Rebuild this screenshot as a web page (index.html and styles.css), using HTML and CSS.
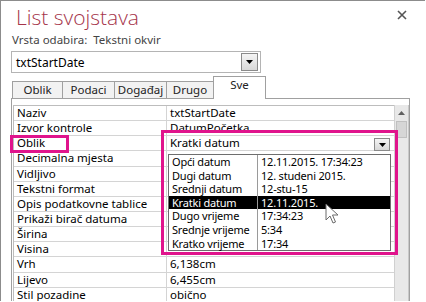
FILE: index.html
```html
<!DOCTYPE html>
<html lang="hr">

<head>
    <meta charset="UTF-8">
    <meta name="viewport" content="width=device-width, initial-scale=1.0">
    <title>List svojstava</title>
    <link rel="stylesheet" href="styles.css">
</head>

<body>
    <div class="window">
        <div class="head">
            <h1 class="title">List svojstava</h1>
            <span class="close">
                <svg width="10" height="10" viewBox="0 0 10 10">
                    <path d="M1 1 L9 9 M9 1 L1 9" stroke="#555" stroke-width="1.6" fill="none" />
                </svg>
            </span>
        </div>
        <div class="subtitle">Vrsta odabira:&nbsp; Tekstni okvir</div>

        <div class="picker">
            <span class="picker-text">txtStartDate</span>
            <span class="drop-btn">
                <svg width="7" height="4" viewBox="0 0 7 4"><path d="M0 0 H7 L3.5 4 Z" fill="#000" /></svg>
            </span>
        </div>

        <div class="tabs">
            <div class="tab">Oblik</div>
            <div class="tab">Podaci</div>
            <div class="tab">Događaj</div>
            <div class="tab">Drugo</div>
            <div class="tab active">Sve</div>
        </div>

        <div class="panel">
            <div class="sheet">
                <div class="props">
                    <div class="cell name">Naziv</div><div class="cell val">txtStartDate</div>
                    <div class="cell name">Izvor kontrole</div><div class="cell val">DatumPočetka</div>
                    <div class="cell name">Oblik</div><div class="cell val">Kratki datum</div>
                    <div class="cell name">Decimalna mjesta</div><div class="cell val"></div>
                    <div class="cell name">Vidljivo</div><div class="cell val"></div>
                    <div class="cell name">Tekstni format</div><div class="cell val"></div>
                    <div class="cell name">Opis podatkovne tablice</div><div class="cell val"></div>
                    <div class="cell name">Prikaži birač datuma</div><div class="cell val"></div>
                    <div class="cell name">Širina</div><div class="cell val"></div>
                    <div class="cell name">Visina</div><div class="cell val"></div>
                    <div class="cell name">Vrh</div><div class="cell val">6,138cm</div>
                    <div class="cell name">Lijevo</div><div class="cell val">6,455cm</div>
                    <div class="cell name">Stil pozadine</div><div class="cell val">obično</div>
                    <div class="cell name"></div><div class="cell val"></div>
                </div>
                <div class="scrollbar">
                    <div class="scroll-up">
                        <svg width="7" height="4" viewBox="0 0 7 4"><path d="M0 4 H7 L3.5 0 Z" fill="#606060" /></svg>
                    </div>
                    <div class="thumb"></div>
                </div>
            </div>
        </div>

        <!-- callouts over the sheet -->
        <div class="mark mark-name"></div>
        <div class="mark mark-value"></div>

        <span class="cell-drop">
            <svg width="7" height="4" viewBox="0 0 7 4"><path d="M0 0 H7 L3.5 4 Z" fill="#000" /></svg>
        </span>

        <div class="list">
            <div class="item"><span>Opći datum</span><span>12.11.2015. 17:34:23</span></div>
            <div class="item"><span>Dugi datum</span><span>12. studeni 2015.</span></div>
            <div class="item"><span>Srednji datum</span><span>12-stu-15</span></div>
            <div class="item selected"><span>Kratki datum</span><span>12.11.2015.</span></div>
            <div class="item"><span>Dugo vrijeme</span><span>17:34:23</span></div>
            <div class="item"><span>Srednje vrijeme</span><span>5:34</span></div>
            <div class="item"><span>Kratko vrijeme</span><span>17:34</span></div>
        </div>

        <svg class="cursor" width="14" height="22" viewBox="0 0 14 22">
            <path d="M1 1 L1 17 L5 13 L8 20 L10.5 19 L7.5 12 L13 12 Z" fill="#fff" stroke="#6a6a6a" stroke-width="1" stroke-linejoin="round" />
        </svg>
    </div>
</body>

</html>
```

FILE: styles.css
```css
body {
    margin: 0;
    padding: 0;
    background-color: #fff;
    font-family: 'Noto Sans', 'Open Sans', sans-serif;
    font-size: 11px;
    color: #000;
}

.window {
    position: relative;
    width: 425px;
    height: 301px;
    overflow: hidden;
    border-top: 1px solid #8c8c8c;
    border-left: 1px solid #8c8c8c;
    padding-left: 10px;
    box-sizing: border-box;
}

.head {
    display: flex;
    justify-content: space-between;
    align-items: flex-start;
}

.title {
    margin: 3px 0 0 5px;
    font-family: 'Open Sans', sans-serif;
    font-weight: 300;
    font-size: 21px;
    line-height: 26px;
    color: #a5344a;
}

.close {
    display: flex;
    margin: 9px 18px 0 0;
}

.subtitle {
    margin: 2px 0 0 1px;
    color: #444;
    font-size: 11.5px;
    line-height: 15px;
}

.picker {
    display: flex;
    align-items: center;
    justify-content: space-between;
    width: 250px;
    height: 22px;
    margin-top: 4px;
    border: 1px solid #b4b4b4;
    box-sizing: border-box;
    padding: 0 2px 0 4px;
    font-size: 12px;
}

.drop-btn {
    display: flex;
    align-items: center;
    justify-content: center;
    width: 15px;
    height: 16px;
    border: 1px solid #8a8a8a;
    background: linear-gradient(#f4f4f4, #d8d8d8);
}

.tabs {
    display: flex;
    align-items: flex-end;
    margin-top: 5px;
    padding-left: 1px;
    height: 20px;
}

.tab {
    width: 49px;
    height: 16px;
    line-height: 16px;
    text-align: center;
    border: 1px solid #a0a0a0;
    border-bottom: none;
    margin-right: -1px;
    background-color: #f2f2f2;
    color: #222;
    font-size: 11.5px;
}

.tab:nth-child(2),
.tab:nth-child(3) {
    width: 51px;
}

.tab:nth-child(4) {
    width: 46px;
}

.tab.active {
    width: 51px;
    height: 22px;
    line-height: 16px;
    background-color: #fff;
    position: relative;
    z-index: 1;
    margin-bottom: -1px;
}

.panel {
    width: 399px;
    height: 220px;
    border: 1px solid #a0a0a0;
    border-bottom: none;
    box-sizing: border-box;
    padding: 6px 0 0 1px;
}

.sheet {
    display: flex;
}

.props {
    display: grid;
    grid-template-columns: 153px 227px;
    grid-auto-rows: 15.15px;
    border-top: 1px solid #bdbdbd;
    border-left: 1px solid #bdbdbd;
}

.cell {
    border-bottom: 1px solid #d4d4d4;
    padding-left: 3px;
    line-height: 14px;
    white-space: nowrap;
    overflow: hidden;
    font-size: 11.5px;
}

.name {
    border-right: 1px solid #d4d4d4;
}

.scrollbar {
    width: 15px;
    height: 220px;
    background-color: #e8e8e8;
    border-left: 1px solid #d0d0d0;
    border-right: 1px solid #c8c8c8;
}

.scroll-up {
    display: flex;
    justify-content: center;
    align-items: center;
    height: 16px;
}

.thumb {
    margin: 0 1px;
    height: 15px;
    background-color: #d6d6d6;
    border: 1px solid #c0c0c0;
}

/* overlays */
.mark {
    position: absolute;
    border: 3px solid #e0148c;
}

.mark-name {
    left: 9px;
    top: 134px;
    width: 53px;
    height: 12px;
}

.mark-value {
    left: 160px;
    top: 129px;
    width: 231px;
    height: 119px;
}

.cell-drop {
    position: absolute;
    left: 373px;
    top: 137px;
    width: 14px;
    height: 11px;
    display: flex;
    align-items: center;
    justify-content: center;
    border: 1px solid #8a8a8a;
    background: linear-gradient(#f4f4f4, #d8d8d8);
}

.list {
    position: absolute;
    left: 167px;
    top: 153px;
    width: 223px;
    border: 1px solid #6e6e6e;
    background-color: #fff;
    box-sizing: border-box;
}

.item {
    display: grid;
    grid-template-columns: 89px 1fr;
    height: 13.6px;
    line-height: 13.6px;
    font-size: 11px;
    letter-spacing: -0.2px;
}

.item span {
    padding-left: 3px;
    white-space: nowrap;
}

.item span:first-child {
    border-right: 1px solid #9a9a9a;
}

.item.selected {
    background-color: #000;
    color: #fff;
}

.cursor {
    position: absolute;
    left: 324px;
    top: 202px;
}
```
